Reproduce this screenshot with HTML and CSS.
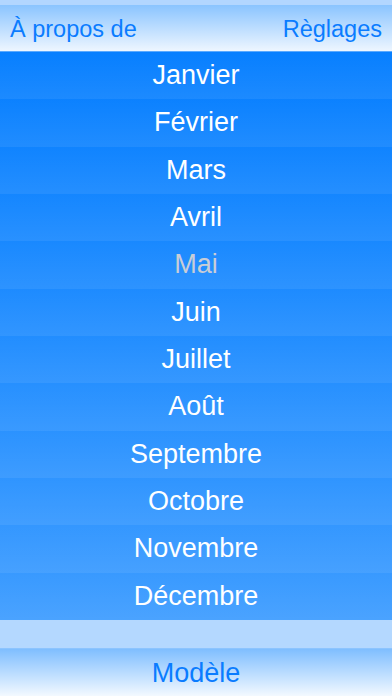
FILE: index.html
```html
<!DOCTYPE html>
<html lang="fr">
<head>
<meta charset="utf-8">
<title>Mois</title>
<link rel="stylesheet" href="styles.css">
</head>
<body>
<div class="app">
  <div class="top-strip"></div>
  <header class="navbar">
    <span class="nav-btn">À propos de</span>
    <span class="nav-btn">Règlages</span>
  </header>
  <ul class="months">
    <li class="month">Janvier</li>
    <li class="month">Février</li>
    <li class="month">Mars</li>
    <li class="month">Avril</li>
    <li class="month month-dim">Mai</li>
    <li class="month">Juin</li>
    <li class="month">Juillet</li>
    <li class="month">Août</li>
    <li class="month">Septembre</li>
    <li class="month">Octobre</li>
    <li class="month">Novembre</li>
    <li class="month">Décembre</li>
  </ul>
  <div class="spacer"></div>
  <footer class="toolbar">
    <span class="tool-btn">Modèle</span>
  </footer>
</div>
</body>
</html>
```
FILE: styles.css
```css
html, body {
  margin: 0;
  padding: 0;
}
body {
  font-family: "Liberation Sans", Arial, sans-serif;
  background: #ffffff;
}
.app {
  width: 392px;
  height: 696px;
  display: flex;
  flex-direction: column;
  overflow: hidden;
}
.top-strip {
  height: 5px;
  background: #b2d6ff;
}
.navbar {
  height: 46px;
  display: flex;
  justify-content: space-between;
  align-items: center;
  padding: 0 10px;
  background: linear-gradient(#8ac4ff, #eef6ff);
  border-bottom: 1px solid #5aa9ff;
}
.nav-btn {
  color: #0a7cff;
  font-size: 23.5px;
  line-height: 1;
  padding-top: 4px;
}
.months {
  list-style: none;
  margin: 0;
  padding: 0;
  height: 568px;
  display: flex;
  flex-direction: column;
  background: linear-gradient(#077fff, #3d9cff);
}
.month {
  flex: 1;
  display: flex;
  align-items: center;
  justify-content: center;
  color: #ffffff;
  font-size: 27px;
  background: linear-gradient(rgba(255,255,255,0), rgba(255,255,255,0.07));
}
.month-dim {
  color: #c9cdd6;
}
.spacer {
  height: 28px;
  background: #b4d8ff;
}
.toolbar {
  height: 48px;
  box-sizing: border-box;
  display: flex;
  justify-content: center;
  align-items: center;
  background: linear-gradient(#7fbeff, #f3f9ff);
  border-top: 1px solid #8cc4ff;
}
.tool-btn {
  color: #0a7cff;
  font-size: 27px;
  line-height: 1;
  padding-top: 2px;
}
```
